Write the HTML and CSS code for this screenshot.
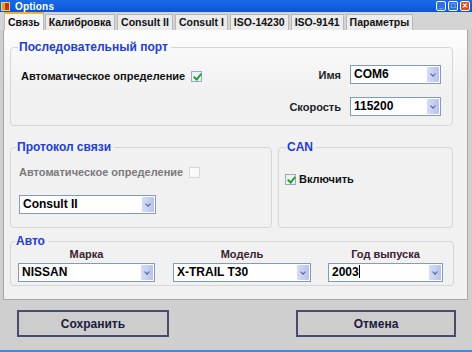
FILE: index.html
```html
<!DOCTYPE html>
<html lang="ru">
<head>
  <meta charset="UTF-8">
  <title>Options</title>
  <link rel="stylesheet" href="styles.css">
</head>
<body>
  <div class="window">
    <!-- Title bar -->
    <div class="titlebar">
      <span class="app-icon"></span>
      <span class="title">Options</span>
      <div class="win-btns">
        <span class="wbtn">_</span>
        <span class="wbtn">□</span>
        <span class="wbtn close">✕</span>
      </div>
    </div>

    <!-- Tabs -->
    <div class="tabs">
      <div class="tab active">Связь</div>
      <div class="tab">Калибровка</div>
      <div class="tab">Consult II</div>
      <div class="tab">Consult I</div>
      <div class="tab">ISO-14230</div>
      <div class="tab">ISO-9141</div>
      <div class="tab">Параметры</div>
    </div>

    <div class="panel">
      <fieldset class="group port">
        <legend>Последовательный порт</legend>
        <div class="port-left">
          <label class="check-row">Автоматическое определение <span class="check on"></span></label>
        </div>
        <div class="port-right">
          <div class="field-row"><span class="lbl">Имя</span><div class="combo w90">COM6<span class="arrow"></span></div></div>
          <div class="field-row"><span class="lbl">Скорость</span><div class="combo w90">115200<span class="arrow"></span></div></div>
        </div>
      </fieldset>

      <div class="mid-row">
        <fieldset class="group proto">
          <legend>Протокол связи</legend>
          <label class="check-row disabled">Автоматическое определение <span class="check"></span></label>
          <div class="combo w136">Consult II<span class="arrow"></span></div>
        </fieldset>
        <fieldset class="group can">
          <legend>CAN</legend>
          <label class="check-row"><span class="check on"></span> Включить</label>
        </fieldset>
      </div>

      <fieldset class="group auto">
        <legend>Авто</legend>
        <div class="auto-col c1">
          <span class="col-lbl">Марка</span>
          <div class="combo w136">NISSAN<span class="arrow"></span></div>
        </div>
        <div class="auto-col c2">
          <span class="col-lbl">Модель</span>
          <div class="combo w137">X-TRAIL T30<span class="arrow"></span></div>
        </div>
        <div class="auto-col c3">
          <span class="col-lbl">Год выпуска</span>
          <div class="combo w114">2003<span class="caret"></span><span class="arrow"></span></div>
        </div>
      </fieldset>
    </div>

    <!-- Footer buttons -->
    <div class="footer">
      <button class="btn save">Сохранить</button>
      <button class="btn cancel">Отмена</button>
    </div>
    <div class="bottom-line"></div>
  </div>
</body>
</html>
```

FILE: styles.css
```css
* {
  margin: 0;
  padding: 0;
  box-sizing: border-box;
}

body {
  width: 472px;
  height: 352px;
  overflow: hidden;
  background: #cfcfcf;
  font-family: "Liberation Sans", Arial, sans-serif;
  font-size: 12px;
  font-weight: bold;
  color: #111;
}

.window {
  display: flex;
  flex-direction: column;
  height: 352px;
}

/* Title bar */
.titlebar {
  height: 12px;
  background: linear-gradient(#1a6ae8, #0a55d8);
  display: flex;
  align-items: center;
  padding-left: 1px;
  color: white;
}

.app-icon {
  width: 9px;
  height: 9px;
  background: linear-gradient(90deg, #e8a020 50%, #c83020 50%);
  border: 1px solid #f0d060;
  margin-right: 5px;
}

.title {
  font-size: 10px;
  letter-spacing: 0.2px;
}

.win-btns {
  margin-left: auto;
  display: flex;
  gap: 2px;
  margin-right: 2px;
}

.wbtn {
  width: 10px;
  height: 10px;
  border: 1px solid #fff;
  border-radius: 2px;
  background: #2a70ec;
  font-size: 7px;
  line-height: 8px;
  text-align: center;
  color: white;
}

.wbtn.close {
  background: #e04a20;
}

/* Tabs */
.tabs {
  display: flex;
  padding: 0 0 0 4px;
  height: 18px;
  align-items: flex-end;
  background: #d4d4d4;
}

.tab {
  height: 16px;
  padding: 0 3px;
  margin-right: 2px;
  font-size: 10.5px;
  line-height: 15px;
  background: #ececec;
  border: 1px solid #b8b8b8;
  border-bottom: none;
}

.tab.active {
  height: 18px;
  padding: 1px 3px 0;
  font-size: 10.5px;
  background: #f6f6f6;
  border-top: 2px solid #f2b030;
  margin-right: 1px;
}

/* Panel */
.panel {
  margin: 0 4px 0 3px;
  height: 270px;
  background: linear-gradient(#fdfdfd, #f1f1f1 60px, #f1f1f1);
  border: 1px solid #a8a8a8;
  border-top: none;
  padding: 10px 14px 0 6px;
}

.group {
  border: 1px solid #d6d6d6;
  border-radius: 4px;
  padding: 0 10px;
}

.group legend {
  color: #1e3ed8;
  font-size: 12px;
  padding: 0 3px 0 1px;
  margin-left: -3px;
  line-height: 14px;
}

.port {
  height: 86px;
  display: flex;
  justify-content: space-between;
}

.port-left {
  padding-top: 16px;
}

.check-row {
  display: flex;
  align-items: center;
  gap: 6px;
  font-size: 11px;
  letter-spacing: 0;
}

.check-row.disabled {
  color: #7a7a7a;
  margin: 12px 0 17px;
}

.check {
  width: 11px;
  height: 11px;
  border: 1px solid #9aa8c0;
  background: #eef2f8;
  position: relative;
}

.check.on::after {
  content: "";
  position: absolute;
  left: 3px;
  top: 0;
  width: 3px;
  height: 6px;
  border: solid #22a030;
  border-width: 0 2px 2px 0;
  transform: rotate(40deg);
}

.disabled .check {
  border-color: #d8d8d8;
  background: #fafafa;
}

.port-right {
  display: flex;
  flex-direction: column;
  gap: 13px;
  padding-top: 11px;
  margin-right: 1px;
}

.field-row {
  display: flex;
  align-items: center;
  gap: 9px;
  justify-content: flex-end;
}

.lbl {
  font-size: 11px;
  color: #222;
}

.combo {
  height: 19px;
  border: 1px solid #7f9db9;
  background: white;
  font-size: 12px;
  line-height: 17px;
  padding-left: 3px;
  position: relative;
  color: #000;
}

.w90 { width: 91px; }
.w136 { width: 137px; }
.w137 { width: 138px; }
.w114 { width: 115px; }

.arrow {
  position: absolute;
  right: 1px;
  top: 1px;
  width: 12px;
  height: 15px;
  background: linear-gradient(90deg, #d6dcf6, #b8c2f0);
  border-radius: 1px;
}

.arrow::after {
  content: "";
  position: absolute;
  left: 4px;
  top: 5px;
  width: 3px;
  height: 3px;
  border: solid #4d6185;
  border-width: 0 1px 1px 0;
  transform: rotate(45deg);
}

.caret {
  display: inline-block;
  width: 1px;
  height: 13px;
  background: #000;
  vertical-align: -2px;
}

.mid-row {
  display: flex;
  gap: 6px;
  margin-top: 14px;
}

.proto {
  width: 262px;
  height: 88px;
  padding-left: 8px;
}

.can {
  flex: 1;
  height: 88px;
}

.can .check-row {
  margin-top: 19px;
  margin-left: -4px;
  gap: 3px;
  font-size: 11px;
}

.auto {
  margin-top: 6px;
  height: 52px;
  display: flex;
  padding-left: 7px;
}

.auto-col {
  display: flex;
  flex-direction: column;
  align-items: center;
  gap: 3px;
}

.c1 { margin-right: 18px; }
.c2 { margin-right: 17px; }

.col-lbl {
  font-size: 11px;
  color: #3a2030;
}

/* Footer */
.footer {
  flex: 1;
  display: flex;
  justify-content: space-between;
  align-items: center;
  padding: 0 16px 3px 17px;
}

.btn {
  height: 27px;
  font-family: "Liberation Sans", Arial, sans-serif;
  font-weight: bold;
  font-size: 12px;
  color: #1a1a40;
  background: #cdcdcd;
  border: 2px solid #4a4a6a;
}

.save { width: 152px; }
.cancel { width: 160px; }

.bottom-line {
  height: 2px;
  background: #3a8ae8;
}
```
